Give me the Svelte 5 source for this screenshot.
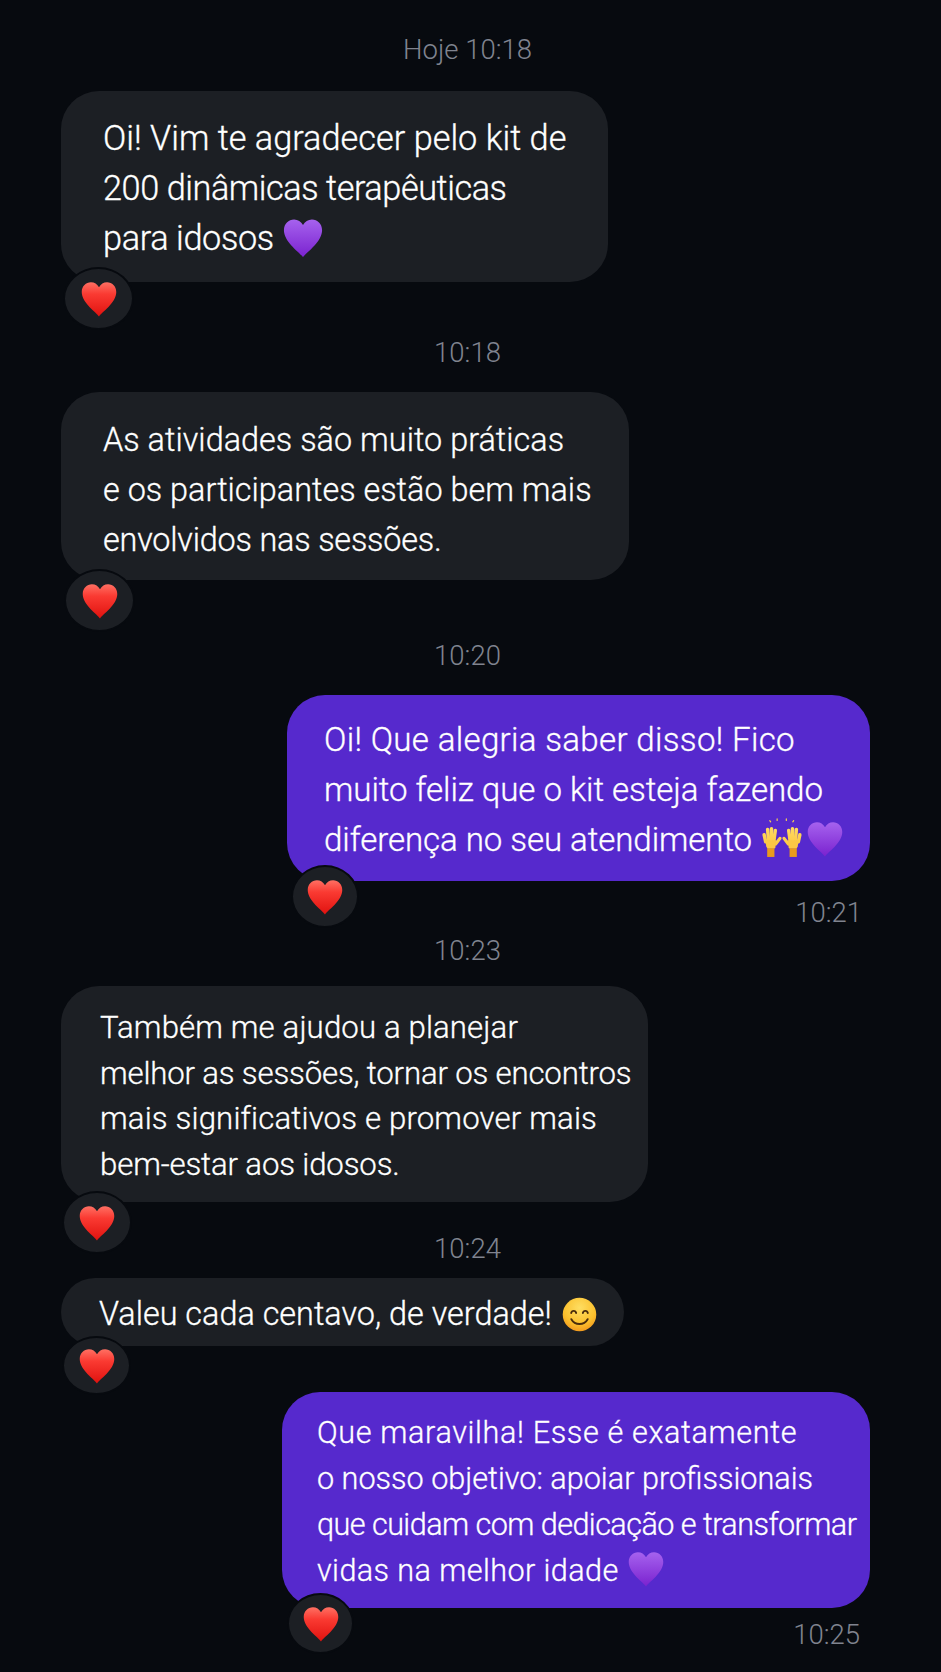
<script>
  const HEART = 'M12 23C10.600 20.500 1.100 14.400 1.100 7.500 1.100 3.900 3.800 1.400 6.900 1.400c2.200 0 4 1.200 5.100 3.200 1.100-2 2.900-3.200 5.100-3.200 3.100 0 5.800 2.500 5.800 6.100C22.900 14.400 13.400 20.500 12 23z';

  // ls: letter spacing per line, the bubbles' lines don't share one exact width ratio
  const items = [
    { type: 'stamp', text: 'Hoje 10:18', cls: 's1' },
    { type: 'msg', cls: 'm1', lines: ['Oi! Vim te agradecer pelo kit de', '200 dinâmicas terapêuticas', 'para idosos'], ls: [0, -0.45, -0.39], emoji: ['purple'] },
    { type: 'stamp', text: '10:18', cls: 's2' },
    { type: 'msg', cls: 'm2', lines: ['As atividades são muito práticas', 'e os participantes estão bem mais', 'envolvidos nas sessões.'], ls: [0.02, 0, -0.2], emoji: [] },
    { type: 'stamp', text: '10:20', cls: 's3' },
    { type: 'msg', cls: 'm3 out', lines: ['Oi! Que alegria saber disso! Fico', 'muito feliz que o kit esteja fazendo', 'diferença no seu atendimento'], ls: [0.32, -0.06, -0.08], emoji: ['hands', 'purple'], time: '10:21' },
    { type: 'stamp', text: '10:23', cls: 's4' },
    { type: 'msg', cls: 'm4', lines: ['Também me ajudou a planejar', 'melhor as sessões, tornar os encontros', 'mais significativos e promover mais', 'bem-estar aos idosos.'], ls: [0.12, -0.18, 0.15, -0.15], emoji: [] },
    { type: 'stamp', text: '10:24', cls: 's5' },
    { type: 'msg', cls: 'm5', lines: ['Valeu cada centavo, de verdade!'], ls: [0], emoji: ['smile'] },
    { type: 'msg', cls: 'm6 out', lines: ['Que maravilha! Esse é exatamente', 'o nosso objetivo: apoiar profissionais', 'que cuidam com dedicação e transformar', 'vidas na melhor idade'], ls: [0.63, 0, -0.56, 0.4], emoji: ['purple'], time: '10:25' },
  ];
</script>

{#snippet hand()}
  <g fill="none" stroke="url(#handTone)" stroke-linecap="round">
    <g stroke-width="3.200">
      <path d="M2 15.500 3.400 22" />
      <path d="M5.200 10.500 6 20" />
      <path d="M8.800 9.800 8.600 20" />
      <path d="M12.300 11.500 11 21" />
    </g>
    <path d="M16.600 18.800 12.600 24" stroke-width="3" />
  </g>
  <path d="M3 20.500h10l-.6 6.500-1 1.500H5.200L4 26.500z" fill="#fcc744" />
  <path d="M4.800 28h6.700v8H4.800z" fill="#e99a1c" />
{/snippet}

{#snippet emojiIcon(name)}
  {#if name === 'purple'}
    <svg class="emoji" viewBox="0 0 24 24" aria-hidden="true"><path d={HEART} fill="url(#purpleHeart)" /></svg>
  {:else if name === 'hands'}
    <svg class="emoji hands" viewBox="0 0 37 36" aria-hidden="true">
      {@render hand()}
      <g transform="matrix(-1 0 0 1 37 0)">{@render hand()}</g>
      <path d="M8 3.500 7.200 2.400M14 2.200V.8M22.500 2.200V.8M28.500 3.500l.8-1.100" fill="none" stroke="#f7cf55" stroke-width="1.100" stroke-linecap="round" />
    </svg>
  {:else if name === 'smile'}
    <svg class="emoji smile" viewBox="0 0 24 24" aria-hidden="true">
      <circle cx="12" cy="12" r="11.500" fill="url(#smileFace)" />
      <g fill="none" stroke="#4a2c0c" stroke-width="1.300" stroke-linecap="round">
        <path d="M6.300 11c.4-2 3-2 3.400 0M14.300 11c.4-2 3-2 3.400 0" />
        <path d="M6.400 15.200c1.300 2.300 3.400 3.300 5.600 3.300s4.300-1 5.600-3.300" />
      </g>
    </svg>
  {/if}
{/snippet}

<svg class="defs" aria-hidden="true">
  <defs>
    <linearGradient id="purpleHeart" x1="0" y1="0" x2="0" y2="1">
      <stop offset="0" stop-color="#a662ee" />
      <stop offset="1" stop-color="#7a22cf" />
    </linearGradient>
    <linearGradient id="redHeart" x1="0" y1="0" x2="0" y2="1">
      <stop offset="0" stop-color="#ff7063" />
      <stop offset=".35" stop-color="#fa3a32" />
      <stop offset="1" stop-color="#e0120f" />
    </linearGradient>
    <linearGradient id="handTone" gradientUnits="userSpaceOnUse" x1="0" y1="8" x2="0" y2="26">
      <stop offset="0" stop-color="#ffdc62" />
      <stop offset="1" stop-color="#fcc744" />
    </linearGradient>
    <radialGradient id="smileFace" cx=".5" cy=".3" r=".8">
      <stop offset="0" stop-color="#fede62" />
      <stop offset=".6" stop-color="#fbc02d" />
      <stop offset="1" stop-color="#ef8a17" />
    </radialGradient>
  </defs>
</svg>

<main class="chat">
  {#each items as item}
    {#if item.type === 'stamp'}
      <p class="stamp {item.cls}">{item.text}</p>
    {:else}
      <div class="msg {item.cls}">
        <div class="bubble">
          {#each item.lines as line, i}
            <span class="line" style="letter-spacing: {item.ls[i]}px">
              {line}
              {#if i === item.lines.length - 1}
                {#each item.emoji as name}
                  {@render emojiIcon(name)}
                {/each}
              {/if}
            </span>
          {/each}
          <span class="reaction">
            <svg viewBox="0 0 24 24" aria-hidden="true"><path d={HEART} fill="url(#redHeart)" /></svg>
          </span>
        </div>
        {#if item.time}
          <span class="time">{item.time}</span>
        {/if}
      </div>
    {/if}
  {/each}
</main>

<style>
  :global(body) {
    background: #070a0f;
  }

  .defs {
    position: absolute;
    width: 0;
    height: 0;
  }

  .chat {
    display: flex;
    flex-direction: column;
    height: 1672px;
    box-sizing: border-box;
    padding: 32px 71px 0 61px;
    background: #070a0f;
    font-family: Roboto, "Noto Sans", sans-serif;
    font-weight: 300;
    overflow: hidden;
  }

  .stamp {
    margin: 0;
    padding-left: 4px;
    text-align: center;
    font-size: 27.500px;
    line-height: 36px;
    color: #80848f;
  }

  .s2 { margin-top: 53px; }
  .s3 { margin-top: 58px; }
  .s4 { margin-top: 2px; }
  .s5 { margin-top: 29px; }

  .msg {
    display: flex;
    flex-direction: column;
    align-items: flex-start;
  }

  .msg.out {
    align-items: flex-end;
  }

  .bubble {
    position: relative;
    box-sizing: border-box;
    display: flex;
    flex-direction: column;
    background: #1c1f24;
    border-radius: 38px;
    color: #fff;
    line-height: 50px;
    white-space: nowrap;
    -webkit-text-stroke: 0.3px #fff;
  }

  .out .bubble {
    background: #5629cd;
  }

  .line {
    display: block;
  }

  .m1 { margin-top: 23px; }
  .m1 .bubble { width: 547px; height: 191px; padding: 22px 0 0 42px; font-size: 34.3px; }
  .m2 { margin-top: 21px; }
  .m2 .bubble { width: 568px; height: 188px; padding: 23px 0 0 42px; font-size: 32.4px; }
  .m3 { margin-top: 21px; }
  .m3 .bubble { width: 583px; height: 186px; padding: 20px 0 0 37px; font-size: 33.1px; }
  .m4 { margin-top: 17px; }
  .m4 .bubble { width: 587px; height: 216px; padding: 19px 0 0 39px; line-height: 45.500px; font-size: 31.2px; }
  .m5 { margin-top: 11px; }
  .m5 .bubble { width: 563px; height: 68px; padding: 12px 0 0 38px; border-radius: 34px; font-size: 32.4px; line-height: 48px; }
  .m6 { margin-top: 46px; }
  .m6 .bubble { width: 588px; height: 216px; padding: 18px 0 0 35px; line-height: 46px; font-size: 30.6px; }

  .emoji {
    display: inline-block;
    width: 38px;
    height: 38px;
    margin-left: 2px;
    vertical-align: -7px;
    stroke: none;
  }

  .m1 .emoji {
    width: 42px;
    height: 42px;
    margin-left: 0;
    vertical-align: -9px;
  }

  .m6 .emoji {
    margin-left: 0;
    vertical-align: -7px;
  }

  .hands {
    width: 40px;
    height: 39px;
    margin-right: 2px;
    vertical-align: -6px;
  }

  .smile {
    width: 35px;
    height: 35px;
  }

  .reaction {
    position: absolute;
    box-sizing: border-box;
    display: flex;
    align-items: center;
    justify-content: center;
    height: 63px;
    border-radius: 50%;
    background: #1c1f24;
    border: 2px solid #070a0f;
  }

  .m1 .reaction { left: 2px; bottom: -48px; width: 71px; }
  .m2 .reaction { left: 3px; bottom: -52px; width: 71px; }
  .m3 .reaction { left: 4px; bottom: -47px; width: 68px; }
  .m4 .reaction { left: 1px; bottom: -52px; width: 70px; }
  .m5 .reaction { left: 1px; bottom: -49px; width: 69px; height: 59px; }
  .m6 .reaction { left: 5px; bottom: -46px; width: 67px; height: 61px; }

  .reaction svg {
    width: 38px;
    height: 38px;
    stroke: none;
  }

  .time {
    margin-top: 14px;
    padding-right: 8px;
    font-size: 27.500px;
    line-height: 36px;
    color: #80848f;
  }

  .m6 .time {
    margin-top: 9px;
    padding-right: 10px;
  }
</style>
